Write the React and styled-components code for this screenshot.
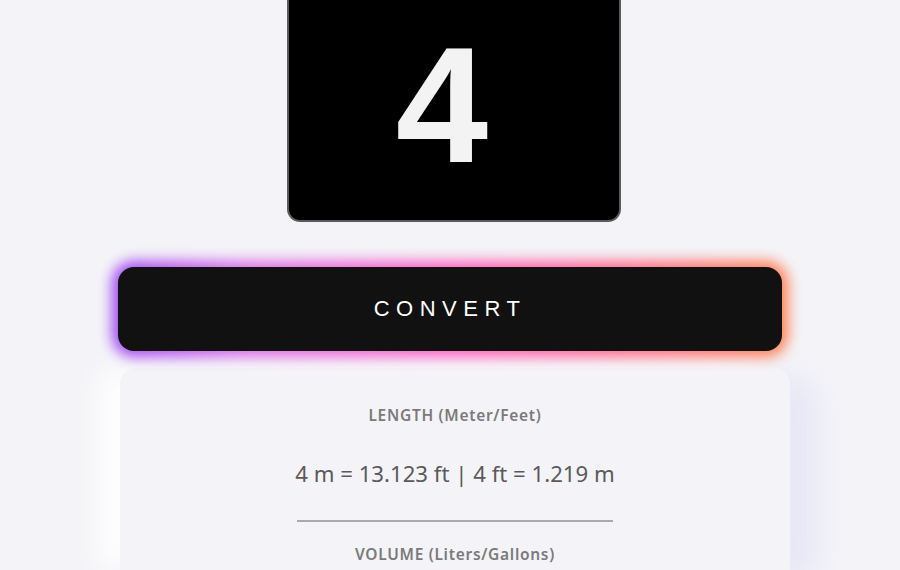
import React from "react";
import styled, { createGlobalStyle } from "styled-components";

const Global = createGlobalStyle`
  html, body { margin: 0; padding: 0; background: #f4f4f8; overflow: hidden; }
  body { font-family: "Noto Sans", "Open Sans", sans-serif; }
`;

const Page = styled.div`
  width: 900px;
  height: 570px;
  display: flex;
  flex-direction: column;
  align-items: center;
  background: #f4f4f8;
  overflow: hidden;
`;

const Display = styled.div`
  width: 334px;
  height: 222px;
  box-sizing: border-box;
  margin-left: 8px;
  background: #000;
  border: 2px solid #5a5a5a;
  border-top: none;
  border-radius: 0 0 13px 13px;
  display: flex;
  align-items: center;
  justify-content: center;
  padding: 0 24px 10px 0;
  color: #f3f3f3;
  font-family: "Liberation Sans", Arial, sans-serif;
  font-weight: 700;
  font-size: 166px;
  line-height: 1;
`;

const ButtonWrap = styled.div`
  margin-top: 45px;
  isolation: isolate;
  display: flex;
`;

const ConvertButton = styled.button`
  width: 664px;
  height: 84px;
  background: #111;
  border: none;
  border-radius: 16px;
  color: #fff;
  font-family: "Liberation Sans", Arial, sans-serif;
  font-size: 22px;
  letter-spacing: 6.5px;
  padding-left: 6px;
  position: relative;
  cursor: pointer;
  &::before {
    content: "";
    position: absolute;
    inset: -6px;
    border-radius: 22px;
    background: linear-gradient(90deg, #9d45f2 0%, #d96ee6 20%, #ff5fc2 50%, #ff6a8c 75%, #ff7f50 100%);
    filter: blur(7px);
    z-index: -1;
  }
`;

const Card = styled.div`
  margin-top: 17px;
  margin-left: 10px;
  width: 670px;
  flex: 1;
  background: #f4f4f8;
  border-radius: 16px 16px 0 0;
  box-shadow: -22px 0 30px rgba(255, 255, 255, 0.9), 26px 10px 34px #e6e6f6;
  display: flex;
  flex-direction: column;
  align-items: center;
  padding-top: 36px;
  box-sizing: border-box;
`;

const Section = styled.div`
  display: flex;
  flex-direction: column;
  align-items: center;
`;

const Label = styled.div`
  font-size: 15.5px;
  font-weight: 600;
  color: #7a7a7a;
  letter-spacing: 0.7px;
`;

const Result = styled.div`
  margin-top: 32px;
  font-size: 22.2px;
  color: #5a5a5a;
`;

const Divider = styled.div`
  width: 316px;
  height: 2px;
  background: #a9a9a9;
  margin: 31px 0 21px;
`;

export default function App() {
  return (
    <Page>
      <Global />
      <Display>4</Display>
      <ButtonWrap>
        <ConvertButton>CONVERT</ConvertButton>
      </ButtonWrap>
      <Card>
        <Section>
          <Label>LENGTH (Meter/Feet)</Label>
          <Result>4 m = 13.123 ft | 4 ft = 1.219 m</Result>
          <Divider />
        </Section>
        <Section>
          <Label>VOLUME (Liters/Gallons)</Label>
        </Section>
      </Card>
    </Page>
  );
}
